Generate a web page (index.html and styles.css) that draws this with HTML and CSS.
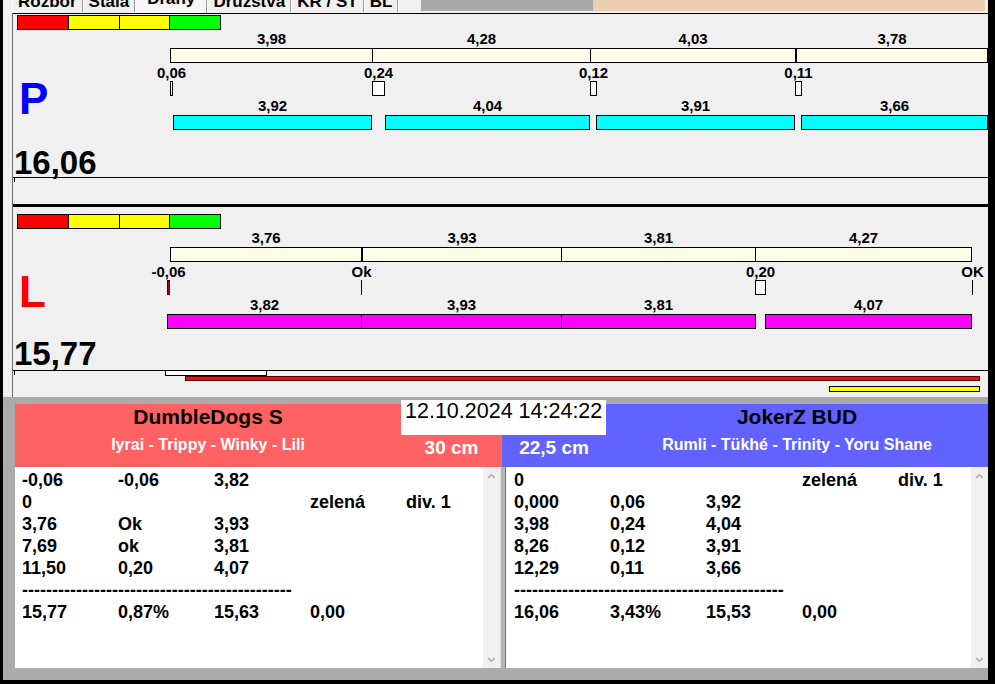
FILE: index.html
```html
<!DOCTYPE html>
<html lang="cs">
<head>
    <meta charset="UTF-8">
    <meta name="viewport" content="width=device-width, initial-scale=1.0">
    <title>Dráhy</title>
    <link rel="stylesheet" href="styles.css">
</head>
<body>
<div class="window">
    <div class="tabs">
        <div class="tab"><span>Rozbor</span></div>
        <div class="tab"><span>Stála</span></div>
        <div class="tab active"><span>Dráhy</span></div>
        <div class="tab"><span>Družstva</span></div>
        <div class="tab"><span>KR / ST</span></div>
        <div class="tab"><span>BL</span></div>
        <div class="tab-gap"></div>
        <div class="tab-fill"></div>
        <div class="tab-title"></div>
        <div class="tab-end"></div>
    </div>

    <div class="lanes">
        <!-- draha P -->
        <section class="lane lane-p">
            <div class="chart">
                <div class="seg" style="left:157px;width:203px"><div class="seg-label">3,98</div><div class="seg-bar"></div></div>
                <div class="seg" style="left:359px;width:219px"><div class="seg-label">4,28</div><div class="seg-bar"></div></div>
                <div class="seg" style="left:577px;width:206px"><div class="seg-label">4,03</div><div class="seg-bar"></div></div>
                <div class="seg" style="left:783px;width:192px"><div class="seg-label">3,78</div><div class="seg-bar"></div></div>

                <div class="pin" style="left:157px;width:3px"><div class="pin-label">0,06</div><div class="pin-box"></div></div>
                <div class="pin" style="left:359px;width:13px"><div class="pin-label">0,24</div><div class="pin-box"></div></div>
                <div class="pin" style="left:577px;width:7px"><div class="pin-label">0,12</div><div class="pin-box"></div></div>
                <div class="pin" style="left:782px;width:7px"><div class="pin-label">0,11</div><div class="pin-box"></div></div>

                <div class="run" style="left:160px;width:199px"><div class="seg-label">3,92</div><div class="run-bar"></div></div>
                <div class="run" style="left:372px;width:205px"><div class="seg-label">4,04</div><div class="run-bar"></div></div>
                <div class="run" style="left:583px;width:199px"><div class="seg-label">3,91</div><div class="run-bar"></div></div>
                <div class="run" style="left:788px;width:187px"><div class="seg-label">3,66</div><div class="run-bar"></div></div>
            </div>

            <div class="lights"><i class="red"></i><i class="yellow"></i><i class="yellow"></i><i class="green"></i></div>
            <div class="letter">P</div>
            <div class="total">16,06</div>
            <div class="foot">
                <div class="foot-tick"></div>
            </div>
        </section>

        <!-- draha L -->
        <section class="lane lane-l">
            <div class="chart">
                <div class="seg" style="left:157px;width:192px"><div class="seg-label">3,76</div><div class="seg-bar"></div></div>
                <div class="seg" style="left:349px;width:200px"><div class="seg-label">3,93</div><div class="seg-bar"></div></div>
                <div class="seg" style="left:548px;width:195px"><div class="seg-label">3,81</div><div class="seg-bar"></div></div>
                <div class="seg" style="left:742px;width:217px"><div class="seg-label">4,27</div><div class="seg-bar"></div></div>

                <div class="pin" style="left:154px;width:3px"><div class="pin-label">-0,06</div><div class="pin-box pin-fault"></div></div>
                <div class="pin" style="left:348px;width:1px"><div class="pin-label">Ok</div><div class="pin-box pin-tick"></div></div>
                <div class="pin" style="left:742px;width:11px"><div class="pin-label">0,20</div><div class="pin-box"></div></div>
                <div class="pin" style="left:959px;width:1px"><div class="pin-label">OK</div><div class="pin-box pin-tick"></div></div>

                <div class="run" style="left:154px;width:195px"><div class="seg-label">3,82</div><div class="run-bar"></div></div>
                <div class="run" style="left:348px;width:201px"><div class="seg-label">3,93</div><div class="run-bar"></div></div>
                <div class="run" style="left:548px;width:195px"><div class="seg-label">3,81</div><div class="run-bar"></div></div>
                <div class="run" style="left:752px;width:207px"><div class="seg-label">4,07</div><div class="run-bar"></div></div>
            </div>

            <div class="lights"><i class="red"></i><i class="yellow"></i><i class="yellow"></i><i class="green"></i></div>
            <div class="letter">L</div>
            <div class="total">15,77</div>
            <div class="foot">
                <div class="foot-tick"></div>
                <div class="meter meter-white" style="left:152px;width:102px"></div>
                <div class="meter meter-red" style="left:172px;width:795px"></div>
                <div class="meter meter-yellow" style="left:816px;width:151px"></div>
            </div>
        </section>
    </div>

    <div class="score">
        <div class="stamp">12.10.2024 14:24:22</div>

        <div class="heads">
            <div class="head head-home">
                <div class="head-main">
                    <div class="team">DumbleDogs S</div>
                    <div class="dogs">Iyrai - Trippy - Winky - Lili</div>
                </div>
                <div class="head-side">30 cm</div>
            </div>
            <div class="head head-away">
                <div class="head-side">22,5 cm</div>
                <div class="head-main">
                    <div class="team">JokerZ BUD</div>
                    <div class="dogs">Rumli - Tükhé - Trinity - Yoru Shane</div>
                </div>
            </div>
        </div>

        <div class="panes">
            <div class="pane pane-home">
                <div class="pane-rows">
                    <div class="row"><span>-0,06</span><span>-0,06</span><span>3,82</span><span></span><span></span></div>
                    <div class="row"><span>0</span><span></span><span></span><span>zelená</span><span>div. 1</span></div>
                    <div class="row"><span>3,76</span><span>Ok</span><span>3,93</span><span></span><span></span></div>
                    <div class="row"><span>7,69</span><span>ok</span><span>3,81</span><span></span><span></span></div>
                    <div class="row"><span>11,50</span><span>0,20</span><span>4,07</span><span></span><span></span></div>
                    <div class="row dashes">---------------------------------------------</div>
                    <div class="row"><span>15,77</span><span>0,87%</span><span>15,63</span><span>0,00</span><span></span></div>
                </div>
                <div class="scroll">
                    <span><svg width="9" height="6" viewBox="0 0 9 6"><path d="M1 5 L4.5 1.5 L8 5" fill="none" stroke="#a6a6a6" stroke-width="1.2"/></svg></span>
                    <span><svg width="9" height="6" viewBox="0 0 9 6"><path d="M1 1 L4.5 4.5 L8 1" fill="none" stroke="#a6a6a6" stroke-width="1.2"/></svg></span>
                </div>
            </div>
            <div class="divider"></div>
            <div class="pane pane-away">
                <div class="pane-rows">
                    <div class="row"><span>0</span><span></span><span></span><span>zelená</span><span>div. 1</span></div>
                    <div class="row"><span>0,000</span><span>0,06</span><span>3,92</span><span></span><span></span></div>
                    <div class="row"><span>3,98</span><span>0,24</span><span>4,04</span><span></span><span></span></div>
                    <div class="row"><span>8,26</span><span>0,12</span><span>3,91</span><span></span><span></span></div>
                    <div class="row"><span>12,29</span><span>0,11</span><span>3,66</span><span></span><span></span></div>
                    <div class="row dashes">---------------------------------------------</div>
                    <div class="row"><span>16,06</span><span>3,43%</span><span>15,53</span><span>0,00</span><span></span></div>
                </div>
                <div class="scroll">
                    <span><svg width="9" height="6" viewBox="0 0 9 6"><path d="M1 5 L4.5 1.5 L8 5" fill="none" stroke="#a6a6a6" stroke-width="1.2"/></svg></span>
                    <span><svg width="9" height="6" viewBox="0 0 9 6"><path d="M1 1 L4.5 4.5 L8 1" fill="none" stroke="#a6a6a6" stroke-width="1.2"/></svg></span>
                </div>
            </div>
        </div>
    </div>
</div>
</body>
</html>
```

FILE: styles.css
```css
* {
    margin: 0;
    padding: 0;
    box-sizing: border-box;
}

body {
    background: #000;
    font-family: "Liberation Sans", Arial, sans-serif;
    color: #000;
}

.window {
    width: 995px;
    height: 684px;
    background: #f0f0f0;
    border-left: 3px solid #000;
    border-right: 7px solid #000;
    border-bottom: 4px solid #000;
    display: flex;
    flex-direction: column;
    overflow: hidden;
}

/* zalozky nahore (useknute) */
.tabs {
    display: flex;
    height: 13px;
    padding-left: 9px;
    flex-shrink: 0;
}

.tab {
    padding: 0 5px;
    border-left: 1px solid #fff;
    border-right: 1px solid #9a9a9a;
    height: 12px;
    overflow: hidden;
    font-size: 17px;
    font-weight: bold;
    line-height: 17px;
    white-space: nowrap;
}

.tab span {
    display: block;
    margin-top: -7px;
}

.tab.active {
    padding: 0 11px;
    height: 13px;
    background: #f6f6f6;
}

.tab.active span {
    margin-top: -10px;
}

.tab-gap {
    flex: 1;
    height: 12px;
    border-left: 1px solid #fff;
}

.tab-fill {
    width: 172px;
    height: 11px;
    background: #a9a9a9;
}

.tab-title {
    width: 392px;
    height: 11px;
    background: #edcfb2;
}

.tab-end {
    width: 3px;
}

/* drahy */
.lanes {
    margin-left: 9px;
    border-left: 1px solid #6d6d6d;
    flex-shrink: 0;
}

.lane {
    position: relative;
    display: flex;
    flex-direction: column;
}

.lane-p {
    height: 194px;
    border-top: 1px solid #000;
    border-bottom: 3px solid #000;
}

.lane-l {
    height: 190px;
}

.chart {
    position: absolute;
    top: 0;
    left: 0;
    right: 0;
    bottom: 0;
}

.lights {
    display: flex;
    width: 204px;
    height: 15px;
    margin-left: 4px;
    border: 1px solid #000;
}

.lights i {
    flex: 1;
    border-left: 1px solid #000;
}

.lights i:first-child {
    border-left: none;
}

.lights .red { background: #ff0000; }
.lights .yellow { background: #ffff00; }
.lights .green { background: #00ff00; }

.lane-p .lights { margin-top: 1px; }
.lane-l .lights { margin-top: 7px; }

.letter {
    font-size: 44px;
    font-weight: bold;
    line-height: 44px;
    margin-left: 6px;
}

.lane-p .letter {
    margin-top: 47px;
    color: #0000ff;
}

.lane-l .letter {
    margin-top: 41px;
    color: #ff0000;
}

.total {
    font-size: 33px;
    font-weight: bold;
    line-height: 28px;
    margin-left: 1px;
}

.lane-p .total { margin-top: 28px; }
.lane-l .total { margin-top: 26px; }

.foot {
    position: relative;
    margin-top: auto;
    height: 27px;
    border-top: 1px solid #000;
}

.foot-tick {
    position: absolute;
    left: 1px;
    top: 0;
    width: 1px;
    height: 4px;
    background: #000;
}

.meter {
    position: absolute;
    border: 1px solid #000;
}

.meter-white {
    top: -1px;
    height: 6px;
    background: #fff;
}

.meter-red {
    top: 5px;
    height: 5px;
    border-color: #5a0000;
    background: #e41313;
}

.meter-yellow {
    top: 15px;
    height: 6px;
    background: #ffff00;
}

/* useky, chyby a behy */
.seg,
.run,
.pin {
    position: absolute;
}

.seg-label,
.pin-label {
    font-size: 15px;
    font-weight: bold;
    line-height: 15px;
    white-space: nowrap;
}

.seg-label {
    height: 17px;
    text-align: center;
}

.seg-bar {
    height: 15px;
    border: 1px solid #000;
    background: #fffde8;
}

.lane-p .seg { top: 17px; }
.lane-l .seg { top: 23px; }

.pin {
    display: flex;
    flex-direction: column;
    align-items: center;
}

.pin-label {
    height: 16px;
}

.pin-box {
    width: 100%;
    height: 15px;
    border: 1px solid #000;
    background: #fff;
}

.pin-fault {
    border-color: #3a0000;
    background: #b80000;
}

.pin-tick {
    border: none;
    background: #000;
}

.lane-p .pin { top: 51px; }
.lane-l .pin { top: 57px; }

.run-bar {
    height: 15px;
    border: 1px solid #000;
}

.lane-p .run { top: 84px; }
.lane-p .run-bar { background: #00ffff; }
.lane-l .run { top: 90px; }
.lane-l .run-bar { background: #ff00ff; }

/* spodni tabulka */
.score {
    position: relative;
    flex: 1;
    display: flex;
    flex-direction: column;
    background: #ababab;
    padding: 7px 0 0 12px;
}

.stamp {
    position: absolute;
    left: 398px;
    top: 3px;
    width: 205px;
    height: 35px;
    background: #fff;
    padding: 1px 0 0 4px;
    font-size: 21.5px;
    line-height: 21px;
    white-space: nowrap;
}

.heads {
    display: flex;
    height: 63px;
}

.head {
    display: flex;
}

.head-home {
    width: 487px;
    background: #ff6262;
}

.head-away {
    width: 486px;
    background: #6262ff;
}

.head-main {
    display: flex;
    flex-direction: column;
    align-items: center;
    font-weight: bold;
    white-space: nowrap;
}

.head-home .head-main { width: 386px; }
.head-away .head-main { width: 382px; }

.team {
    margin-top: 2px;
    font-size: 21px;
    line-height: 21px;
}

.dogs {
    margin-top: 10px;
    font-size: 16px;
    line-height: 16px;
    color: #fff;
}

.head-side {
    display: flex;
    align-items: flex-end;
    justify-content: center;
    padding-bottom: 10px;
    font-size: 19px;
    font-weight: bold;
    line-height: 19px;
    color: #fff;
    white-space: nowrap;
}

.head-home .head-side { width: 101px; }
.head-away .head-side { width: 104px; }

.panes {
    display: flex;
    height: 201px;
}

.pane {
    display: flex;
    background: #fff;
}

.pane-home { width: 485px; }
.pane-away { width: 482px; }

.divider {
    width: 6px;
    background: #b4b4b4;
    border-left: 1px solid #dedede;
    border-right: 1px solid #737373;
}

.pane-rows {
    flex: 1;
    min-width: 0;
    overflow: hidden;
    padding: 2px 0 0 7px;
}

.pane-away .pane-rows {
    padding-left: 8px;
}

.row {
    display: grid;
    grid-template-columns: repeat(5, 96px);
    height: 22px;
    font-size: 18px;
    font-weight: bold;
    line-height: 22px;
    white-space: nowrap;
}

.row.dashes {
    display: block;
}

.scroll {
    width: 17px;
    flex-shrink: 0;
    background: #f0f0f0;
    display: flex;
    flex-direction: column;
    justify-content: space-between;
    align-items: center;
}

.scroll span {
    height: 17px;
    display: flex;
    align-items: center;
}

.scroll svg {
    display: block;
}
```
